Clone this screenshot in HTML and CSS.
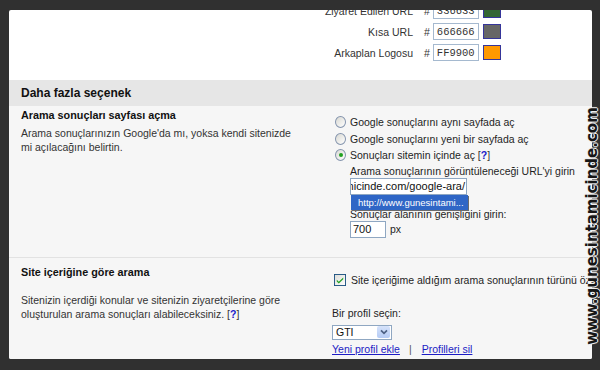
FILE: index.html
```html
<!DOCTYPE html>
<html lang="tr">
<head>
  <meta charset="UTF-8" />
  <title>Arama seçenekleri</title>
  <link rel="stylesheet" href="styles.css">
</head>
<body>
<div class="panel">

  <!-- Renkler -->
  <div class="colors">
    <div class="color-row">
      <span class="color-label">Ziyaret Edilen URL</span>
      <span class="hash">#</span>
      <input class="hex" type="text" value="336633">
      <span class="swatch swatch-visited"></span>
    </div>
    <div class="color-row">
      <span class="color-label">Kısa URL</span>
      <span class="hash">#</span>
      <input class="hex" type="text" value="666666">
      <span class="swatch swatch-short"></span>
    </div>
    <div class="color-row">
      <span class="color-label">Arkaplan Logosu</span>
      <span class="hash">#</span>
      <input class="hex" type="text" value="FF9900">
      <span class="swatch swatch-logo"></span>
    </div>
  </div>

  <div class="section-head">Daha fazla seçenek</div>

  <!-- Sonuç sayfası -->
  <div class="option option-first">
    <div class="option-info">
      <h3>Arama sonuçları sayfası açma</h3>
      <p>Arama sonuçlarınızın Google'da mı, yoksa kendi sitenizde mi açılacağını belirtin.</p>
    </div>
    <div class="option-controls">
      <div class="choice"><span class="radio"></span>Google sonuçlarını aynı sayfada aç</div>
      <div class="choice"><span class="radio"></span>Google sonuçlarını yeni bir sayfada aç</div>
      <div class="choice"><span class="radio checked"></span>Sonuçları sitemin içinde aç&nbsp;<span class="help">[<a href="#">?</a>]</span></div>
      <div class="sub">
        <div class="sub-label">Arama sonuçlarının görüntüleneceği URL'yi girin</div>
        <div class="url-field">
          <div class="url-box"><span>http://www.gunesintamicinde.com/google-ara/</span></div>
          <div class="suggest">http://www.gunesintami...</div>
        </div>
        <div class="sub-label">Sonuçlar alanının genişliğini girin:</div>
        <div class="width-row"><input class="width" type="text" value="700"><span>px</span></div>
      </div>
    </div>
  </div>

  <!-- Site içeriği -->
  <div class="option option-last">
    <div class="option-info">
      <h3>Site içeriğine göre arama</h3>
      <p class="spaced">Sitenizin içerdiği konular ve sitenizin ziyaretçilerine göre oluşturulan arama sonuçları alabileceksiniz. <span class="help">[<a href="#">?</a>]</span></p>
    </div>
    <div class="option-controls controls-tight">
      <div class="choice check-row">
        <svg class="checkbox" width="12" height="12" viewBox="0 0 13 13">
          <defs>
            <linearGradient id="cbg" x1="0" y1="0" x2="1" y2="1">
              <stop offset="0" stop-color="#dcdcd7"/>
              <stop offset="1" stop-color="#ffffff"/>
            </linearGradient>
          </defs>
          <rect x="0.5" y="0.5" width="12" height="12" fill="url(#cbg)" stroke="#1c5180"/>
          <path d="M3 6.2 L5.2 8.5 L10 3.7 L10 5.6 L5.2 10.4 L3 8.1 Z" fill="#21a121"/>
        </svg>
        <span class="nowrap">Site içeriğime aldığım arama sonuçlarının türünü özelleştirin</span>
      </div>
      <div class="profile-label">Bir profil seçin:</div>
      <div class="select">
        <span class="select-value">GTI</span>
        <span class="select-btn">
          <svg width="8" height="6" viewBox="0 0 9 7"><path d="M1 1.5 L4.5 5 L8 1.5" fill="none" stroke="#4d6185" stroke-width="2"/></svg>
        </span>
      </div>
      <div class="profile-links">
        <a href="#">Yeni profil ekle</a><span class="sep">|</span><a href="#">Profilleri sil</a>
      </div>
    </div>
  </div>

</div>
<div class="watermark">www.gunesintamicinde.com</div>
</body>
</html>
```

FILE: styles.css
```css
* { box-sizing: border-box; }
body {
  margin: 0;
  background: #303030;
  font-family: "Liberation Sans", Arial, sans-serif;
  font-size: 10.5px;
  color: #1e1e1e;
}
.panel {
  width: 583px;
  height: 349px;
  margin: 10px 0 0 9px;
  background: #fff;
  overflow: hidden;
  border-radius: 2px;
}

/* renkler */
.colors { margin-top: -10px; padding-bottom: 17px; }
.color-row { display: flex; align-items: center; height: 21px; }
.color-label { width: 404px; text-align: right; color: #333; }
.hash { margin-left: 11px; color: #333; }
.hex {
  width: 46px; height: 17px; margin: 0 0 0 3px; padding: 0 0 0 3px;
  border: 1px solid #a5b9cf; background: #fff;
  font-family: "Liberation Mono", monospace; font-size: 10.5px; color: #333;
}
.swatch { width: 18px; height: 15px; margin-left: 4px; border: 1px solid #35359a; }
.swatch-visited { background: #336633; }
.swatch-short { background: #666666; }
.swatch-logo { background: #ff9900; }

.section-head {
  height: 26px; line-height: 26px; padding-left: 12px;
  background: #e6e6e6; font-weight: bold; font-size: 12px; color: #111;
}

/* seçenekler */
.option {
  display: flex; align-items: flex-start;
  background: #f6f6f6; padding: 2px 0 19px 12px;
  border-bottom: 1px solid #e2e2e2;
}
.option-last { padding-top: 7.5px; border-bottom: none; height: 200px; }
.option-info { width: 280px; flex-shrink: 0; }
.option-info h3 { margin: 0; font-size: 10.8px; line-height: 15px; color: #111; }
.option-info p { margin: 3px 0 0; line-height: 14px; color: #333; }
.option-info p.spaced { margin-top: 12.5px; }
.option-controls { margin: 6px 0 0 31px; min-width: 0; }
.controls-tight { margin-top: 6.5px; }

.choice { display: flex; align-items: center; height: 16.5px; white-space: nowrap; }
.radio {
  display: inline-flex; align-items: center; justify-content: center;
  width: 11px; height: 12px; margin: 0 4px 0 3px;
  border: 1px solid #8494ad; border-radius: 50%;
  background: linear-gradient(135deg, #d8d8d2, #fff);
}
.radio.checked::after {
  content: ""; width: 4px; height: 4px; border-radius: 50%; background: #21a121;
}
.help { color: #333; }
.help a { color: #2020c8; font-weight: bold; text-decoration: none; }

.sub { margin-left: 18px; }
.sub-label { line-height: 14px; white-space: nowrap; }
.url-field { position: relative; width: 117px; margin-bottom: 12px; }
.url-box {
  display: flex; justify-content: flex-end; align-items: center;
  height: 17px; padding-right: 1px; overflow: hidden;
  border: 1px solid #8fa7c2; background: #fff; color: #111; white-space: nowrap;
  font-size: 11px;
}
.suggest {
  position: absolute; left: 1px; top: 17px; width: 117px; height: 15px;
  padding-left: 7px; line-height: 15px;
  background: #2f66c6; color: #fff; font-size: 9.5px;
  box-shadow: 1px 1px 0 #6c6c6c;
}
.width-row { display: flex; align-items: center; }
.width {
  width: 36px; height: 17px; margin: 0 4px 0 0; padding: 0 2px;
  border: 1px solid #8fa7c2; background: #fff;
  font-family: inherit; font-size: 11px; color: #111;
}

.check-row { height: 16px; }
.checkbox { margin: 0 5px 0 2px; flex-shrink: 0; }
.nowrap { white-space: nowrap; }
.profile-label { margin-top: 18px; line-height: 14px; }
.select {
  display: flex; align-items: center; justify-content: space-between;
  width: 60px; height: 15px; margin-top: 5px; padding: 0 1px 0 3px;
  border: 1px solid #8fa7c2; background: #fff; color: #111;
}
.select-btn {
  display: flex; align-items: center; justify-content: center;
  width: 13px; height: 12px; border-radius: 2px;
  background: linear-gradient(#d6e3fb, #b5cbf5);
}
.profile-links { margin-top: 2px; line-height: 14px; white-space: nowrap; }
.profile-links a { color: #1c1cc4; }
.sep { margin: 0 10px 0 9px; color: #555; }

.watermark {
  position: absolute; left: 592px; top: 226px;
  transform: translate(-50%, -50%) rotate(-90deg);
  font-family: "DejaVu Sans", sans-serif; font-size: 15px; font-weight: bold; line-height: 1;
  color: #161616; white-space: nowrap;
  text-shadow: 1px 0 #eee, -1px 0 #eee, 0 1px #eee, 0 -1px #eee, 0 0 2px #fff;
}
```
